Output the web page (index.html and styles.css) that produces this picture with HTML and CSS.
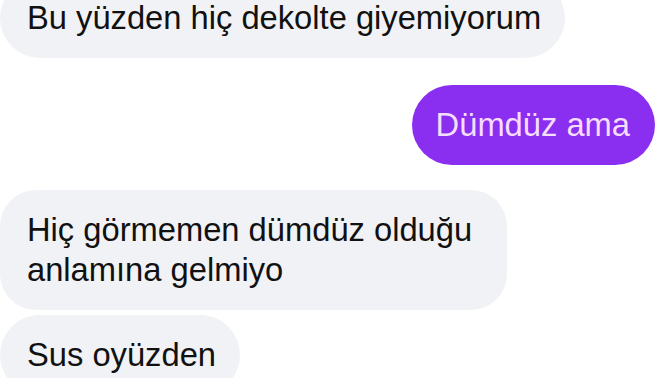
FILE: index.html
```html
<!DOCTYPE html>
<html lang="tr">
<head>
<meta charset="UTF-8" />
<meta name="viewport" content="width=device-width, initial-scale=1" />
<title>Sohbet</title>
<link rel="stylesheet" href="styles.css">
</head>
<body>
  <div class="chat">
    <div class="msg in first">Bu yüzden hiç dekolte giyemiyorum</div>
    <div class="msg out">Dümdüz ama</div>
    <div class="msg in group-top narrow">Hiç görmemen dümdüz olduğu anlamına gelmiyo</div>
    <div class="msg in group-next">Sus oyüzden</div>
  </div>
</body>
</html>
```

FILE: styles.css
```css
body {
  margin: 0;
  background: #ffffff;
  font-family: "Liberation Sans", Arial, sans-serif;
  overflow: hidden;
}
.chat {
  display: flex;
  flex-direction: column;
  align-items: flex-start;
  padding-right: 17px;
}
.msg {
  font-size: 32.7px;
  line-height: 40px;
  padding: 20px 24px 20px 27px;
  border-radius: 40px;
  max-width: 520px;
}
.in {
  background: #f1f2f5;
  color: #111111;
}
.out {
  align-self: flex-end;
  background: #8a2ef0;
  color: #f6dcff;
  padding-left: 24px;
  padding-right: 25px;
}
.first {
  margin-top: -22px;
  margin-bottom: 27px;
}
.group-top {
  margin-top: 25px;
  border-radius: 36px;
}
.narrow {
  max-width: 456px;
}
.group-next {
  margin-top: 5px;
}
```
